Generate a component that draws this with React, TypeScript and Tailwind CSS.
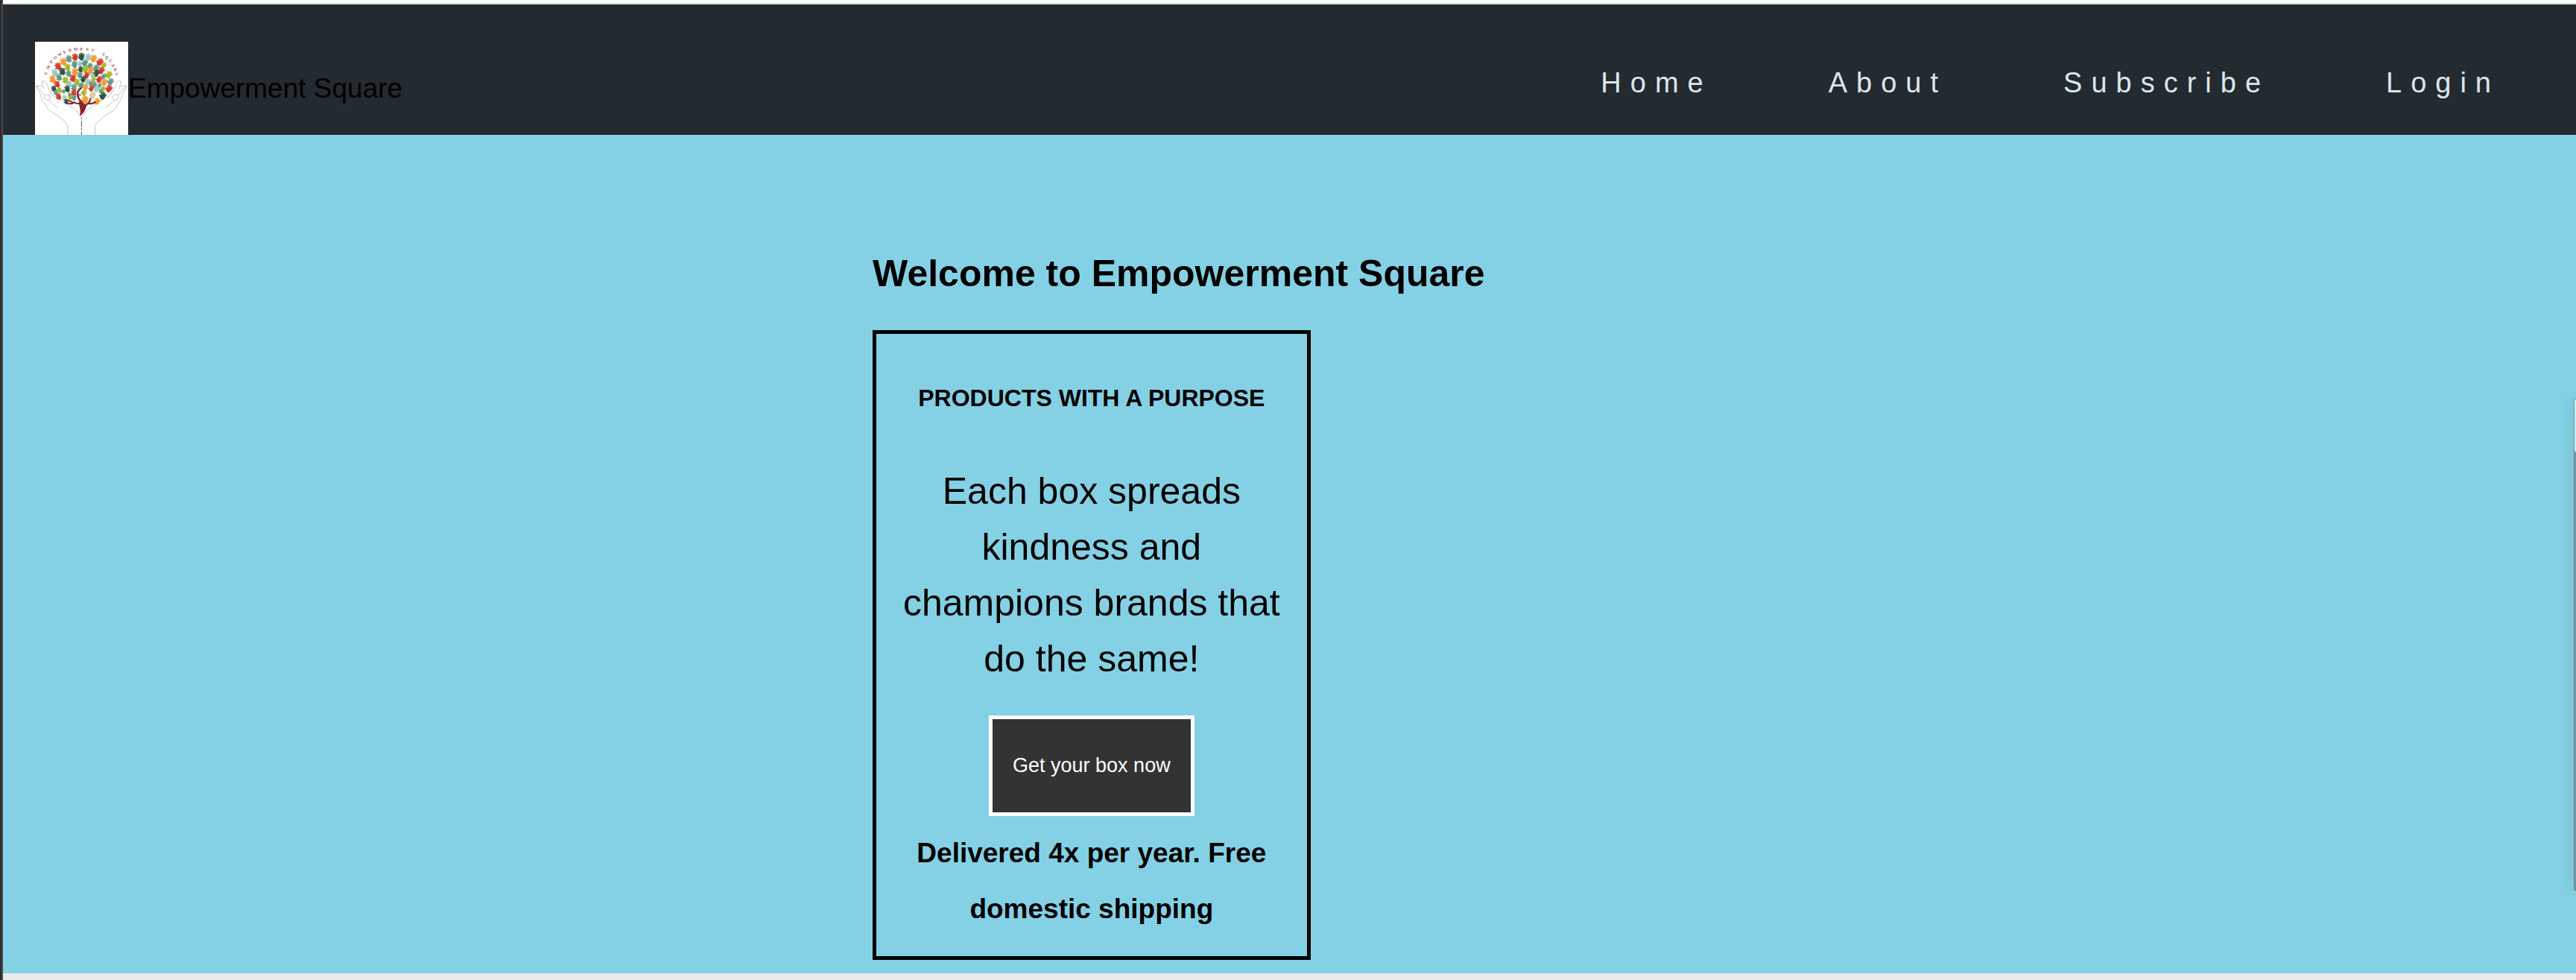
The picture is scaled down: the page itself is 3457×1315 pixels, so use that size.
type Hand = [x: number, y: number, fill: string, angle: number, scale: number];

const R = "#d93a2b";
const O = "#f29a36";
const T = "#629a8b";
const L = "#9ccac6";
const D = "#2f5344";
const G = "#a9b92c";
const C = "#d6cfa4";

const hands: Hand[] = [
  [167, 68, R, -8, 1], [193, 66, D, 0, 1.05], [220, 68, L, 12, 1], [242, 74, O, 18, 1.05],
  [142, 75, T, -18, 1], [120, 87, O, -26, 1.05], [267, 88, R, 28, 1.05], [283, 101, G, 28, 0.85],
  [99, 105, R, -30, 1.05], [137, 109, G, -15, 1], [165, 97, T, -6, 1], [187, 95, L, 0, 0.8],
  [207, 92, T, 8, 1], [227, 104, T, 14, 0.9], [252, 112, T, 18, 1], [273, 122, R, 24, 1],
  [86, 131, L, -30, 1], [116, 126, D, -24, 1.05], [141, 134, T, -18, 0.9], [167, 126, O, -8, 1.05],
  [190, 117, D, 0, 0.85], [209, 117, G, 8, 1], [231, 121, O, 12, 1], [253, 133, D, 18, 1],
  [303, 139, G, 30, 1.05], [282, 145, T, 20, 0.8], [77, 157, O, -26, 1.05], [103, 150, T, -22, 0.95],
  [128, 161, G, -18, 1], [159, 153, R, -12, 1.05], [187, 140, T, -4, 0.9], [214, 141, R, 12, 0.9],
  [238, 143, L, 14, 0.75], [264, 158, R, 18, 0.95], [285, 169, O, 22, 1], [310, 167, T, 26, 1],
  [95, 177, R, -28, 0.95], [144, 175, L, -14, 0.9], [175, 168, G, -8, 0.95], [200, 157, D, 4, 0.9],
  [218, 166, L, 8, 0.85], [242, 159, G, 14, 0.8], [246, 179, T, 12, 0.8], [231, 174, T, 10, 0.7],
  [82, 195, D, -30, 0.85], [104, 201, G, -24, 0.85], [136, 196, D, -18, 0.95], [163, 190, T, -12, 0.95],
  [192, 182, T, 0, 0.9], [210, 188, O, 8, 0.9], [233, 194, R, 12, 0.85], [254, 196, L, 16, 0.9],
  [278, 198, G, 18, 0.95], [304, 195, R, 24, 1.05], [266, 181, T, 16, 0.65], [270, 205, T, 12, 0.6],
  [90, 211, T, -28, 0.75], [121, 206, T, -20, 0.6], [101, 227, R, -26, 0.9], [125, 232, L, -20, 0.8],
  [148, 226, G, -16, 0.9], [162, 211, R, -10, 0.9], [163, 231, T, -4, 0.8], [145, 218, T, -10, 0.5],
  [203, 211, G, 8, 0.9], [207, 240, O, 6, 1.15], [238, 221, C, 12, 1.05], [279, 224, D, 22, 1.05],
  [256, 246, O, 18, 0.95], [132, 247, D, -14, 0.75],
];

const motto: [string, number, number][] = [
  ["E", 50, 133], ["M", 60, 109], ["P", 72, 87], ["O", 88, 70], ["W", 106, 57], ["E", 125, 47],
  ["R", 147, 41], ["M", 170, 37], ["E", 193, 37], ["N", 216, 38], ["T", 238, 42], ["S", 281, 57],
  ["Q", 295, 70], ["U", 309, 84], ["A", 320, 102], ["R", 328, 119], ["E", 334, 137],
];

function mottoAngle(x: number, y: number) {
  return Math.round((Math.atan2(x - 192, 185 - y) * 180) / Math.PI);
}

function OpenHands() {
  const side =
    "M192 308 L184 297 Q166 274 146 264 Q130 256 120 246 Q104 236 84 226 Q72 216 68 208 L48 167 Q42 161 34 166 L40 196 M34 184 L14 184 Q9 184 12 190 Q26 206 32 232 Q38 248 48 258 Q54 276 66 284 L98 304 Q126 322 138 344 L138 382 M48 220 Q56 214 66 224 Q72 234 62 240 Q50 242 44 234 Q42 226 48 220 M62 240 Q76 258 96 272 M14 184 L46 222";
  return (
    <g fill="none" stroke="#8d8d8d" strokeWidth="1.6">
      <path d={side} />
      <path d={side} transform="translate(386 0) scale(-1 1)" />
      <path d="M193 310 V382" stroke="#555" strokeWidth="3" strokeDasharray="9 5 26 4" />
    </g>
  );
}

function Logo() {
  return (
    <svg
      className="size-[125px] shrink-0 bg-white"
      viewBox="6 6 375 375"
      role="img"
      aria-label="Empowerment Square logo"
    >
      <defs>
        <g id="palm">
          <path d="M-8 -2 Q-9 8 -5 13 Q1 17 7 12 Q10 8 9 -2 Q0 -6 -8 -2Z" stroke="none" />
          <path
            d="M-5 2 L-8 -9 M-1 0 L-2 -13 M3 0 L4 -12 M6 3 L10 -8 M-4 9 L-12 2"
            fill="none"
            strokeWidth="5"
            strokeLinecap="round"
          />
        </g>
      </defs>
      <OpenHands />
      {hands.map(([x, y, fill, angle, scale], i) => (
        <use
          key={i}
          href="#palm"
          fill={fill}
          stroke={fill}
          transform={`translate(${x} ${y}) rotate(${angle}) scale(${scale})`}
        />
      ))}
      <g fill="none" stroke="#86252c" strokeLinecap="round">
        <path d="M196 252 Q178 236 177 216 Q177 202 190 194" strokeWidth="8" />
        <path d="M178 220 H190" strokeWidth="4" />
        <path d="M192 256 Q164 256 140 241 M166 250 Q148 260 134 252" strokeWidth="6" />
        <path d="M204 264 Q226 256 229 236 M218 254 Q234 258 248 250" strokeWidth="7" />
      </g>
      <path d="M182 246 Q202 252 214 262 Q208 290 187 306 Q190 280 184 262Z" fill="#86252c" />
      <g
        fill="#9c4a50"
        fontFamily="Liberation Serif, serif"
        fontSize="17"
        fontWeight="700"
        textAnchor="middle"
      >
        {motto.map(([letter, x, y], i) => (
          <text key={i} transform={`translate(${x} ${y}) rotate(${mottoAngle(x, y)})`} y="5">
            {letter}
          </text>
        ))}
      </g>
    </svg>
  );
}

const links = ["Home", "About", "Subscribe", "Login"];

export default function App() {
  return (
    <div className="flex min-h-screen border-l-2 border-[#2b2b2b] font-['Liberation_Sans',Arial,sans-serif] text-black">
      <div className="relative flex flex-1 flex-col overflow-hidden border-l-2 border-[#4a4a4a]">
        <div className="h-[6px] border-b-2 border-[#d9dfe0] bg-white" />
        <header className="flex items-center justify-between bg-[#232a30] pt-[50px] pr-[102px] pl-[43px]">
          <a href="#" className="flex items-center text-[37px] leading-[75px]">
            <Logo />
            Empowerment Square
          </a>
          <nav className="pb-[15px]">
            <ul className="flex gap-[156px] text-[38px] leading-[75px] tracking-[12px] text-[#dce6ec]">
              {links.map((label) => (
                <li key={label}>
                  <a href="#">{label}</a>
                </li>
              ))}
            </ul>
          </nav>
        </header>

        <main className="flex-1 bg-[#84d1e5] pt-[149px] pb-4 pl-[33.8%]">
          <h1 className="text-[50px] leading-[75px] font-bold">Welcome to Empowerment Square</h1>
          <section className="mt-[38px] flex w-[25.7%] flex-col items-center border-5 border-black px-6 pt-[49px] pb-[26px] text-center">
            <h2 className="text-[32px] leading-[75px] font-bold whitespace-nowrap">
              PRODUCTS WITH A PURPOSE
            </h2>
            <p className="mt-[50px] text-[50px] leading-[75px]">
              Each box spreads kindness and champions brands that do the same!
            </p>
            <button
              type="button"
              className="mt-[38px] h-[135px] cursor-pointer border-5 border-white bg-[#333333] px-[27px] text-[27px] whitespace-nowrap text-white"
            >
              Get your box now
            </button>
            <p className="mt-3 text-[37px] leading-[75px] font-bold">
              Delivered 4x per year. Free domestic shipping
            </p>
          </section>
        </main>

        <div className="h-[9px] bg-[#e9e9e9]" />

        <div className="absolute top-[535px] right-0 h-[660px] w-[3px] border border-r-0 border-[#5d93a2] bg-[#6f94a3] shadow-[0_0_20px_rgba(0,0,0,0.35)]">
          <div className="h-[70px] bg-[#c9f1f9]" />
        </div>
      </div>
    </div>
  );
}
